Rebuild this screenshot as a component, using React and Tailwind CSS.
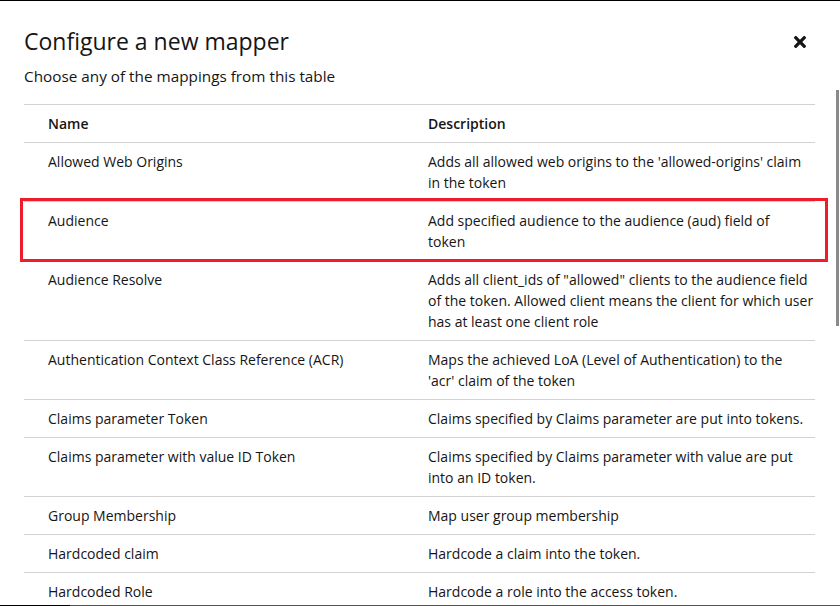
import React from 'react';

const mappers = [
  { name: 'Allowed Web Origins', desc: ["Adds all allowed web origins to the 'allowed-origins' claim", 'in the token'] },
  { name: 'Audience', desc: ['Add specified audience to the audience (aud) field of', 'token'] },
  {
    name: 'Audience Resolve',
    desc: [
      'Adds all client_ids of "allowed" clients to the audience field',
      'of the token. Allowed client means the client for which user',
      'has at least one client role',
    ],
  },
  {
    name: 'Authentication Context Class Reference (ACR)',
    desc: ['Maps the achieved LoA (Level of Authentication) to the', "'acr' claim of the token"],
  },
  { name: 'Claims parameter Token', desc: ['Claims specified by Claims parameter are put into tokens.'] },
  {
    name: 'Claims parameter with value ID Token',
    desc: ['Claims specified by Claims parameter with value are put', 'into an ID token.'],
  },
  { name: 'Group Membership', desc: ['Map user group membership'] },
  { name: 'Hardcoded claim', desc: ['Hardcode a claim into the token.'] },
  { name: 'Hardcoded Role', desc: ['Hardcode a role into the access token.'] },
];

const CloseIcon = () => (
  <svg width="12" height="12" viewBox="0 80 352 352" fill="#151515">
    <path d="M242.72 256l100.07-100.07c12.28-12.28 12.28-32.19 0-44.48l-22.24-22.24c-12.28-12.28-32.19-12.28-44.48 0L176 189.28 75.93 89.21c-12.28-12.28-32.19-12.28-44.48 0L9.21 111.45c-12.28 12.28-12.28 32.19 0 44.48L109.28 256 9.21 356.07c-12.28 12.28-12.28 32.19 0 44.48l22.24 22.24c12.28 12.28 32.2 12.28 44.48 0L176 322.72l100.07 100.07c12.28 12.28 32.2 12.28 44.48 0l22.24-22.24c12.28-12.28 12.28-32.19 0-44.48L242.72 256z" />
  </svg>
);

export default function App() {
  return (
    <div className="w-[840px] h-[606px] flex flex-col bg-white overflow-hidden text-[#151515] font-['Open_Sans',sans-serif]">
      <div className="h-px bg-black shrink-0" />

      {/* Modal header */}
      <div className="flex justify-between pl-6 pr-[34px] pt-6 shrink-0">
        <div>
          <h1 className="text-[23px] leading-[32px]">Configure a new mapper</h1>
          <p className="mt-[7px] text-[15.3px] leading-[24px]">Choose any of the mappings from this table</p>
        </div>
        <button className="mt-[11px] h-[12px]">
          <CloseIcon />
        </button>
      </div>

      {/* Scrollable body */}
      <div className="flex-1 min-h-0 flex relative">
        <div className="flex-1 overflow-hidden pl-6 pt-4">
          <table className="w-[791px] table-fixed text-[14px] leading-[21px]">
            <colgroup>
              <col className="w-[380px]" />
              <col />
            </colgroup>
            <thead>
              <tr className="border-y border-[#d2d2d2]">
                <th className="text-left font-semibold pl-6 py-2">Name</th>
                <th className="text-left font-semibold pl-6 py-2">Description</th>
              </tr>
            </thead>
            <tbody>
              {mappers.map((m) => (
                <tr key={m.name} className="border-b border-[#d2d2d2] align-top">
                  <td className="pl-6 py-2 whitespace-nowrap">{m.name}</td>
                  <td className="pl-6 py-2">
                    {m.desc.map((line, i) => (
                      <span key={i} className="block whitespace-nowrap">{line}</span>
                    ))}
                  </td>
                </tr>
              ))}
            </tbody>
          </table>
        </div>

        {/* scrollbar */}
        <div className="w-1 shrink-0">
          <div className="mt-[2px] h-[236px] w-[3px] bg-[#8a8a8a]" />
        </div>

        {/* highlight annotation */}
        <div className="absolute left-[20px] top-[110px] w-[808px] h-[64px] border-[3px] border-[#ee1d2b] pointer-events-none" />
      </div>

      <div className="h-px flex shrink-0">
        <div className="w-[70px] bg-black" />
        <div className="flex-1 bg-[#555555]" />
      </div>
    </div>
  );
}
